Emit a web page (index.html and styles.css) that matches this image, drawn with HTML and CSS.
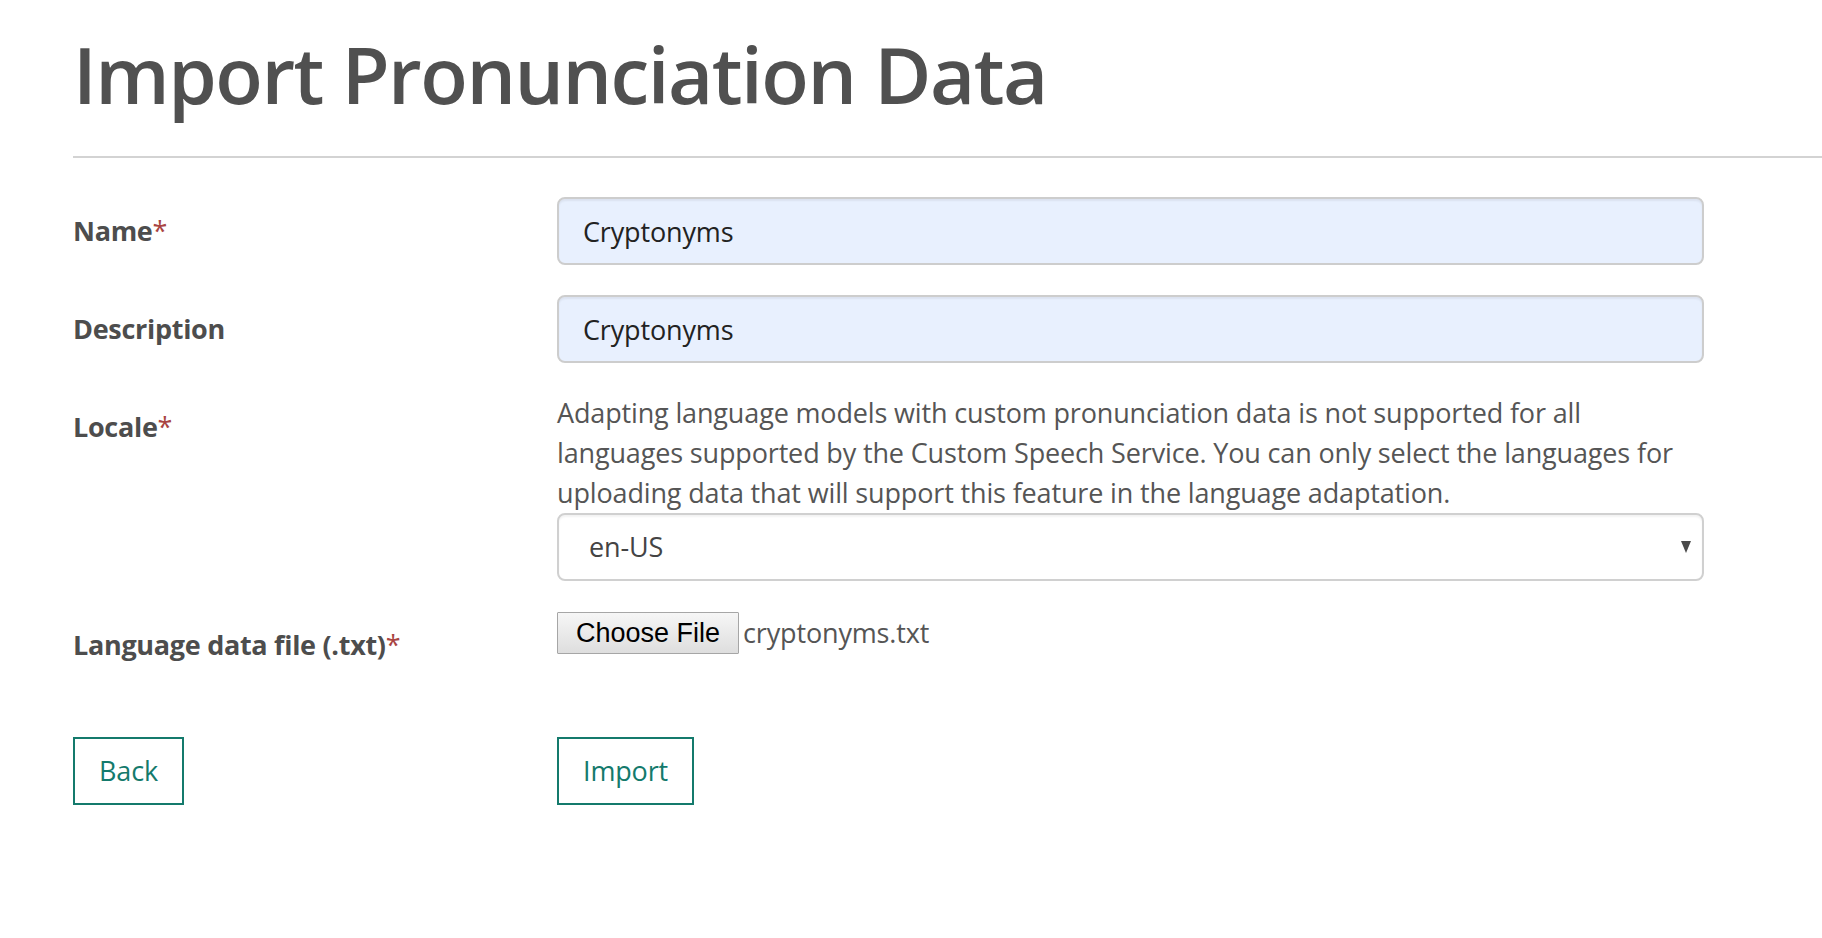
FILE: index.html
```html
<!DOCTYPE html>
<html lang="en">
<head>
<meta charset="utf-8">
<title>Import Pronunciation Data</title>
<link rel="stylesheet" href="styles.css">
</head>
<body>
<main class="page">
  <h1 class="title">Import Pronunciation Data</h1>
  <hr class="rule">
  <form class="form">
    <div class="row">
      <label class="label">Name<span class="req">*</span></label>
      <div class="control"><input class="input" type="text" value="Cryptonyms"></div>
    </div>
    <div class="row">
      <label class="label">Description</label>
      <div class="control"><input class="input" type="text" value="Cryptonyms"></div>
    </div>
    <div class="row">
      <label class="label">Locale<span class="req">*</span></label>
      <div class="control">
        <p class="help">Adapting language models with custom pronunciation data is not supported for all languages supported by the Custom Speech Service. You can only select the languages for uploading data that will support this feature in the language adaptation.</p>
        <div class="select-wrap">
          <select class="select"><option>en-US</option></select>
        </div>
      </div>
    </div>
    <div class="row">
      <label class="label">Language data file (.txt)<span class="req">*</span></label>
      <div class="control file">
        <button type="button" class="file-btn">Choose File</button><span class="file-name">cryptonyms.txt</span>
      </div>
    </div>
    <div class="row actions">
      <div><button type="button" class="btn">Back</button></div>
      <div><button type="button" class="btn">Import</button></div>
    </div>
  </form>
</main>
</body>
</html>
```
FILE: styles.css
```css
* { box-sizing: border-box; }
html, body { margin: 0; padding: 0; background: #fff; }
body {
  font-family: "Open Sans", "Noto Sans", sans-serif;
  font-size: 27px;
  line-height: 40px;
  letter-spacing: -0.15px;
  color: #555;
  overflow: hidden;
}
.page { padding-left: 73px; }
.title {
  margin: 30px 0 0;
  font-size: 78px;
  line-height: 88px;
  font-weight: 600;
  color: #505050;
  letter-spacing: -1.5px;
}
.rule {
  margin: 38px 0 0;
  border: 0;
  border-top: 2px solid #d3d3d3;
  height: 0;
}
.form { margin-top: 39px; }
.row {
  display: grid;
  grid-template-columns: 484px 1147px;
  margin-bottom: 30px;
}
.label {
  padding-top: 14px;
  font-weight: 700;
  color: #4d4d4d;
  letter-spacing: -0.3px;
}
.req { color: #a94442; font-weight: 400; }
.input {
  display: block;
  width: 100%;
  height: 68px;
  padding: 12px 24px;
  border: 2px solid #cdcdcd;
  border-radius: 8px;
  background: #e8f0fe;
  font: inherit;
  letter-spacing: inherit;
  color: #222;
  box-shadow: inset 0 2px 2px rgba(0,0,0,0.06);
  outline: none;
}
.help { margin: 0; color: #555; }
.select-wrap { position: relative; }
.select {
  display: block;
  width: 100%;
  height: 68px;
  padding: 0 30px 0 30px;
  border: 2px solid #d0d0d0;
  border-radius: 8px;
  background: #fff;
  font: inherit;
  letter-spacing: inherit;
  color: #444;
  -webkit-appearance: none;
  appearance: none;
  box-shadow: inset 0 2px 2px rgba(0,0,0,0.05);
}
.select-wrap::after {
  content: "";
  position: absolute;
  right: 13px;
  top: 28px;
  width: 0;
  height: 0;
  border-left: 5.5px solid transparent;
  border-right: 5.5px solid transparent;
  border-top: 12px solid #4a4a4a;
}
.file { display: flex; align-items: flex-start; padding-top: 1px; }
.file-btn {
  height: 42px;
  width: 182px;
  padding: 0;
  font-family: "Liberation Sans", Arial, sans-serif;
  font-size: 27px;
  letter-spacing: 0;
  color: #000;
  background: linear-gradient(#f6f6f6, #dedede);
  border: 1px solid #a6a6a6;
  border-radius: 1px;
}
.file-name {
  margin-left: 4px;
  line-height: 42px;
  color: #555;
}
.actions { margin-top: 72px; }
.btn {
  height: 68px;
  padding: 0 24px;
  border: 2px solid #147a6c;
  background: #fff;
  color: #147a6c;
  font: inherit;
  letter-spacing: inherit;
  border-radius: 0;
}
```
